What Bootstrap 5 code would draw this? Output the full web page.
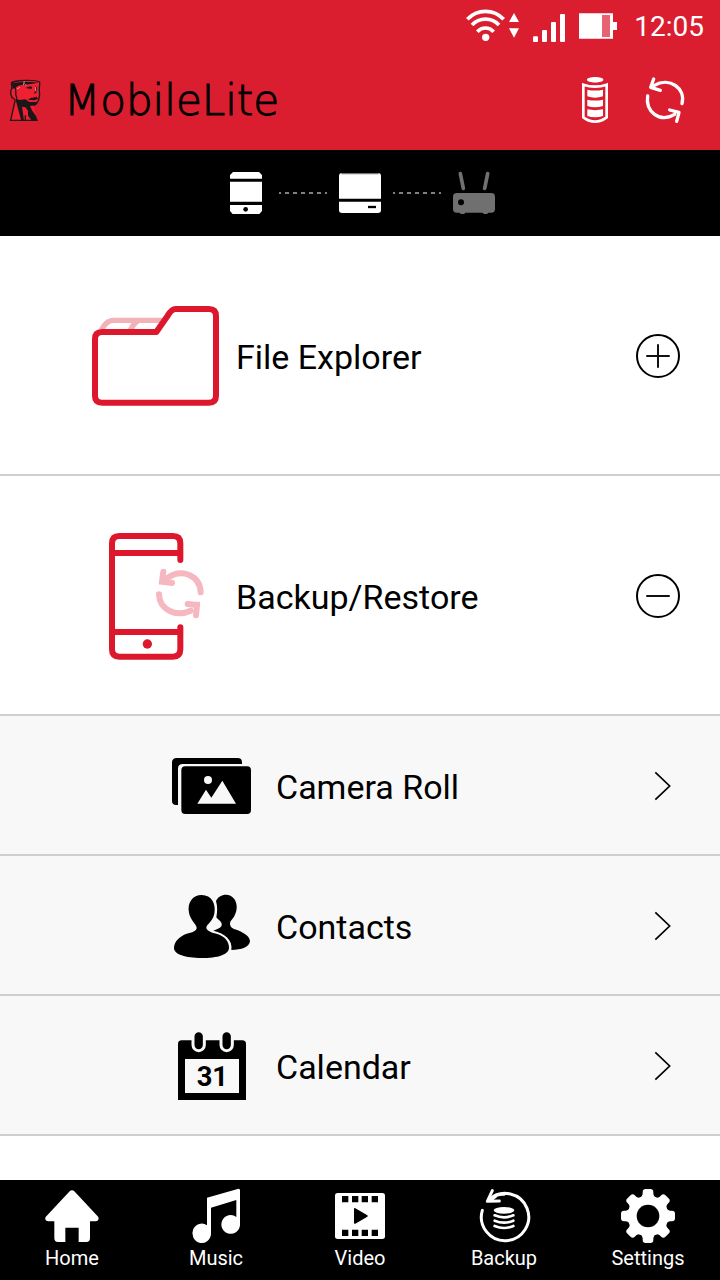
<!DOCTYPE html>
<html lang="en">
<head>
<meta charset="utf-8">
<meta name="viewport" content="width=device-width, initial-scale=1">
<title>MobileLite</title>
<link href="https://cdn.jsdelivr.net/npm/bootstrap@5.3.0/dist/css/bootstrap.min.css" rel="stylesheet">
<style>
  body { font-family: Roboto, "Liberation Sans", sans-serif; color: #000; background: #fff; }
  svg { display: block; flex: none; overflow: visible; }
  a, a:hover { color: inherit; text-decoration: none; }
  .top-area { background: #da1e30; color: #fff; }
  .status-bar { height: 50px; padding: 4px 16px 0; font-size: 28px; line-height: 32px; }
  .status-bar svg { margin-bottom: 2px; }
  .status-bar .clock { margin-left: 16px; }
  .title-bar { height: 100px; padding: 2px 32px 0 8px; }
  .brand-name { font-family: "DejaVu Sans", sans-serif; font-weight: 200; font-size: 42px; line-height: 48px; color: #000; -webkit-text-stroke: 1px #000; margin: 0 0 0 20px; }
  .icon-button { border: 0; background: none; padding: 0; color: inherit; }
  .title-actions { gap: 34px; }
  .link-chain { height: 86px; gap: 11px; background: #000; color: #707070; }
  .menu-row { border-bottom: 2px solid #cfcfcf; padding: 2px 40px 0 92px; height: 240px; gap: 16px; font-size: 34px; line-height: 40px; }
  .sub-row { height: 140px; padding-left: 172px; gap: 24px; background: #f8f8f8; }
  .row-title { font-size: inherit; line-height: inherit; font-weight: 400; margin: 0; padding-top: 2px; }
  .tab-bar { height: 100px; background: #000; color: #fff; padding-top: 9px; font-size: 20px; line-height: 24px; }
  .tab-bar a { gap: 3px; flex: 1 1 0; }
</style>
</head>
<body class="d-flex flex-column min-vh-100">

<svg width="0" height="0" class="position-absolute" aria-hidden="true">
  <symbol id="plus" viewBox="0 0 132 132">
    <circle cx="66" cy="66" r="63" fill="none" stroke="#000" stroke-width="6"/>
    <path d="M33 66H99M66 33V99" stroke="#111" stroke-width="6" stroke-linecap="round"/>
  </symbol>
  <symbol id="minus" viewBox="0 0 132 132">
    <circle cx="66" cy="66" r="63" fill="none" stroke="#000" stroke-width="6"/>
    <path d="M33 66H99" stroke="#111" stroke-width="6" stroke-linecap="round"/>
  </symbol>
  <symbol id="chevron" viewBox="0 0 132 132">
    <path d="M58 25L101 66L58 107" fill="none" stroke="#000" stroke-width="5"/>
  </symbol>
</svg>

<header class="top-area">
  <div class="status-bar d-flex align-items-center justify-content-end">
    <svg width="54" height="34" viewBox="48 24 162 102" fill="none" stroke="#fff">
      <path d="M52 55A74 74 0 0 1 161 55M66 72A55 55 0 0 1 147 72M82 92A33 33 0 0 1 131 92" stroke-width="11"/>
      <g fill="#fff" stroke="none"><circle cx="107" cy="109" r="11"/><path d="M192 36L207 63H177ZM192 110L207 82H177Z"/></g>
    </svg>
    <svg class="ms-2" width="38" height="34" viewBox="234 24 114 102" fill="#fff">
      <rect x="249" y="106" width="15" height="17" rx="3"/><rect x="276" y="87" width="15" height="36" rx="3"/><rect x="303" y="63" width="15" height="60" rx="3"/><rect x="330" y="39" width="15" height="84" rx="3"/>
    </svg>
    <svg class="ms-2" width="44" height="34" viewBox="372 24 132 102" fill="#fff">
      <path d="M387 37H489V63H501V87H489V113H387Z"/><path d="M456 42H480V108H456Z" fill="#e86372"/>
    </svg>
    <span class="clock">12:05</span>
  </div>
  <div class="title-bar d-flex align-items-center">
    <svg width="36" height="44" viewBox="24 57 108 132">
      <path d="M33 68C45 60 105 59 119 66L117 86L119 101L115 105L118 119L110 130L102 137L106 160L111 182H32L42 116C31 112 29 96 34 84Z" fill="#ee2032"/>
      <path d="M33 69C46 60 104 59 119 66C120 80 115 91 119 103L116 120L109 131L101 137M34 70L36 84C28 96 32 113 44 118M36 84L46 83C51 91 42 98 51 116" fill="none" stroke="#1b1719" stroke-width="4"/>
      <path d="M36 69C57 66 93 64 117 68C96 71 84 72 72 76C62 73 51 77 45 85L37 80Z" fill="#1b1719"/>
      <path d="M77 84Q90 77 97 81L94 87ZM107 78L111 82L109 98L103 102Z" fill="#1b1719"/>
      <path d="M48 116L60 120L76 118L88 126H112L104 136L90 138L97 153L108 168L113 182H96L84 167V152L76 142L66 140L72 182H64L48 124Z" fill="#1b1719"/>
      <path d="M84 119C94 110 102 114 109 110L115 116L104 121Z" fill="#1b1719"/>
      <path d="M46 118L32 181H113M76 166V180" fill="none" stroke="#1b1719" stroke-width="4"/>
      <path d="M73 63L70 76M73 71L79 76M50 87L60 82M106 81L107 94" stroke="#ffc5c6" stroke-width="2"/>
    </svg>
    <h1 class="brand-name">MobileLite</h1>
    <div class="title-actions d-flex align-items-center ms-auto">
    <button class="icon-button" aria-label="Device battery">
      <svg width="30" height="48" viewBox="390 231 90 144" fill="#fff">
        <path d="M411 239C411 228 460 228 460 239C460 250 411 250 411 239Z"/>
        <path d="M400 254Q435 266 470 254V352Q435 378 400 352Z" fill="none" stroke="#fff" stroke-width="8"/>
        <path d="M412 269Q435 274 459 269V289Q435 297 412 289ZM412 299Q435 304 459 299V318Q435 326 412 318ZM412 328Q435 333 459 328V348Q435 356 412 348Z"/>
      </svg>
    </button>
    <button class="icon-button" aria-label="Refresh">
      <svg width="44" height="48" viewBox="582 231 132 144" fill="none" stroke="#fff" stroke-width="10" stroke-linecap="round" stroke-linejoin="round">
        <path d="M593 288C586 334 628 370 674 343M696 311C708 265 659 230 613 256"/>
        <path d="M611 237L602 262L631 271M659 330L687 337L680 364"/>
      </svg>
    </button>
    </div>
  </div>
</header>

<section class="link-chain d-flex align-items-center justify-content-center" aria-label="Connection">
  <svg width="44" height="44" viewBox="42 63 132 132" fill="#fff">
    <path d="M60 75L69 66H147L156 75V86H60ZM60 95H156V155H60ZM60 165H156V183L148 192H68L60 183Z"/><circle cx="107" cy="178" r="7" fill="#000"/>
  </svg>
  <svg width="48" height="4" viewBox="0 0 48 4"><path d="M0 2H48" stroke="#808080" stroke-width="2" stroke-dasharray="2 4 4 4 4 4 4 4 4 4 4 4 2 9"/></svg>
  <svg width="44" height="44" viewBox="384 63 132 132" fill="#fff">
    <rect x="387" y="69" width="126" height="120" rx="9"/><path d="M394 71H506" stroke="#777" stroke-width="4"/><path d="M387 151H513" stroke="#000" stroke-width="9"/><path d="M474 171H498" stroke="#000" stroke-width="7"/>
  </svg>
  <svg width="48" height="4" viewBox="0 0 48 4"><path d="M0 2H48" stroke="#808080" stroke-width="2" stroke-dasharray="2 4 4 4 4 4 4 4 4 4 4 4 2 9"/></svg>
  <svg width="44" height="44" viewBox="726 63 132 132" fill="#707070">
    <path d="M751 71L760 115M833 71L824 115" stroke="#707070" stroke-width="11" stroke-linecap="round"/>
    <rect x="729" y="129" width="126" height="59" rx="11"/><path d="M748 186H767L763 192H752ZM817 186H836L832 192H821Z"/><circle cx="753" cy="157" r="9" fill="#000"/>
  </svg>
</section>

<main class="flex-grow-1">
  <section class="menu-row d-flex align-items-center">
    <svg width="128" height="128" viewBox="36 6 384 384" fill="none" stroke-linejoin="round">
      <path d="M63 121C73 104 82 91 101 91H246M147 131C153 114 163 98 176 91" stroke="#f3b1b8" stroke-width="16"/>
      <path d="M66 126H229L263 77Q275 57 287 57H387Q408 57 408 78V318Q408 338 387 338H66Q45 338 45 318V147Q45 126 66 126Z" fill="#fff" stroke="#dd182d" stroke-width="18"/>
    </svg>
    <h2 class="row-title">File Explorer</h2>
    <button class="icon-button ms-auto" aria-label="Expand File Explorer" aria-expanded="false"><svg width="44" height="44"><use href="#plus"/></svg></button>
  </section>
  <section class="menu-row d-flex align-items-center">
    <svg width="128" height="128" viewBox="6 36 384 384" fill="none" stroke="#dd182d" stroke-width="18" stroke-linecap="round">
      <path d="M271 120V70Q271 48 249 48H88Q66 48 66 70V388Q66 410 88 410H249Q271 410 271 388V322M66 99H271M66 336H271"/>
      <circle cx="172" cy="372" r="14" fill="#dd182d" stroke="none"/>
      <g stroke="#f5b8c0">
        <path d="M207 223C209 268 256 293 302 272M332 217C330 166 276 143 232 174"/>
        <path d="M220 155L216 185L246 189M293 252L321 255L318 286"/>
      </g>
      <path d="M207 193L220 165L240 192ZM301 247L330 245L319 274Z" fill="#f5b8c0" stroke="none"/>
    </svg>
    <h2 class="row-title">Backup/Restore</h2>
    <button class="icon-button ms-auto" aria-label="Collapse Backup/Restore" aria-expanded="true"><svg width="44" height="44"><use href="#minus"/></svg></button>
  </section>
  <a href="#camera" class="menu-row sub-row d-flex align-items-center">
    <svg width="80" height="80" viewBox="36 18 240 240">
      <path d="M36 68Q36 54 50 54H233Q246 54 246 67V72H68Q54 72 54 86V195H49Q36 195 36 182Z"/>
      <rect x="64" y="79" width="209" height="143" rx="12"/>
      <g fill="#f8f8f8"><circle cx="144" cy="120" r="12"/><path d="M112 191L138 149L154 173L187 122L228 191Z"/></g>
    </svg>
    <span class="row-title">Camera Roll</span>
    <svg class="ms-auto" width="44" height="44"><use href="#chevron"/></svg>
  </a>
  <a href="#contacts" class="menu-row sub-row d-flex align-items-center">
    <svg width="80" height="80" viewBox="36 18 240 240">
      <path d="M168 63C177 41 211 36 225 60C237 83 226 108 214 121C206 131 211 143 222 147C248 155 270 168 270 184C268 201 245 210 214 210C219 181 195 160 160 152C174 146 190 142 184 128C180 121 172 117 169 112C172 96 173 80 168 63Z"/>
      <path d="M125 45C155 45 169 72 163 101C159 123 140 133 139 142C138 152 153 158 174 163C194 170 207 184 207 203C207 224 173 234 124 234C77 234 42 223 42 204C42 184 59 169 80 161C96 157 110 153 110 143C110 133 90 119 87 98C81 67 99 45 125 45Z"/>
    </svg>
    <span class="row-title">Contacts</span>
    <svg class="ms-auto" width="44" height="44"><use href="#chevron"/></svg>
  </a>
  <a href="#calendar" class="menu-row sub-row d-flex align-items-center">
    <svg width="80" height="80" viewBox="36 18 240 240">
      <path d="M54 72Q54 61 65 61H247Q258 61 258 72V240H54Z"/>
      <path d="M75 117H237V219H75Z" fill="#f8f8f8"/>
      <g stroke="#f8f8f8" stroke-width="9"><rect x="99" y="32" width="34" height="60" rx="17"/><rect x="183" y="32" width="34" height="60" rx="17"/></g>
      <text x="157" y="199" text-anchor="middle" font-family="Roboto, sans-serif" font-weight="700" font-size="82">31</text>
    </svg>
    <span class="row-title">Calendar</span>
    <svg class="ms-auto" width="44" height="44"><use href="#chevron"/></svg>
  </a>
</main>

<nav class="tab-bar d-flex mt-auto" aria-label="Main">
  <a href="#home" class="d-flex flex-column align-items-center">
    <svg width="54" height="54" viewBox="135 42 162 162" fill="#fff"><path d="M209 49Q216 42 223 49L293 124C299 130 295 139 287 139H270V190Q270 201 259 201H236V158H196V201H174Q163 201 163 190V139H145C137 139 132 130 139 124Z"/></svg>
    Home
  </a>
  <a href="#music" class="d-flex flex-column align-items-center">
    <svg width="54" height="54" viewBox="567 42 162 162" fill="#fff"><path d="M621 68L713 42Q720 40 720 46V151A28 28 0 1 1 709 126V75L633 98V177A28 29 0 1 1 621 151Z"/></svg>
    Music
  </a>
  <a href="#video" class="d-flex flex-column align-items-center">
    <svg width="54" height="54" viewBox="9 42 162 162"><rect x="15" y="54" width="150" height="138" rx="8" fill="#fff"/><path d="M36 63H55V82H36ZM66 63H85V82H66ZM95 63H114V82H95ZM125 63H144V82H125ZM36 164H55V183H36ZM66 164H85V183H66ZM95 164H114V183H95ZM125 164H144V183H125ZM72 102Q72 98 76 100L112 121Q115 123 112 125L76 146Q72 147 72 144Z"/></svg>
    Video
  </a>
  <a href="#backup" class="d-flex flex-column align-items-center">
    <svg width="54" height="54" viewBox="441 42 162 162" fill="none" stroke="#fff" stroke-width="9" stroke-linecap="round" stroke-linejoin="round"><path d="M457 106A71 71 0 1 0 478 73Q498 57 522 58"/><path d="M487 47L472 79L508 78M475 78L496 65"/><ellipse cx="522" cy="106" rx="31" ry="10" fill="#fff" stroke="none"/><path d="M494 121Q522 133 550 121M494 137Q522 149 550 137M494 153Q522 165 550 153" stroke-width="8"/></svg>
    Backup
  </a>
  <a href="#settings" class="d-flex flex-column align-items-center">
    <svg width="54" height="54" viewBox="-81 -81 162 162"><g fill="#fff"><circle r="61"/><g id="cog"><path id="tooth" d="M-24 -54Q-17 -59 -16 -66V-72Q-16 -81 -7 -81H7Q16 -81 16 -72V-66Q17 -59 24 -54Z"/><use href="#tooth" transform="rotate(45)"/><use href="#tooth" transform="rotate(90)"/><use href="#tooth" transform="rotate(135)"/></g><use href="#cog" transform="rotate(180)"/></g><circle r="34"/></svg>
    Settings
  </a>
</nav>

<script src="https://cdn.jsdelivr.net/npm/bootstrap@5.3.0/dist/js/bootstrap.bundle.min.js"></script>
</body>
</html>
